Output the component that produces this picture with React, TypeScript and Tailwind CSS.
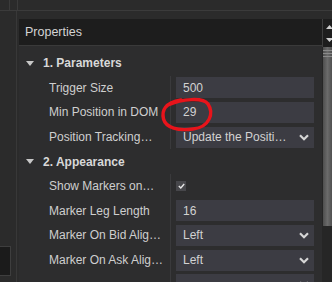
import React from 'react';

type Row =
  | { kind: 'section'; title: string }
  | { kind: 'text'; label: string; value: string }
  | { kind: 'select'; label: string; value: string }
  | { kind: 'check'; label: string };

const rows: Row[] = [
  { kind: 'section', title: '1. Parameters' },
  { kind: 'text', label: 'Trigger Size', value: '500' },
  { kind: 'text', label: 'Min Position in DOM', value: '29' },
  { kind: 'select', label: 'Position Tracking…', value: 'Update the Positi…' },
  { kind: 'section', title: '2. Appearance' },
  { kind: 'check', label: 'Show Markers on…' },
  { kind: 'text', label: 'Marker Leg Length', value: '16' },
  { kind: 'select', label: 'Marker On Bid Alig…', value: 'Left' },
  { kind: 'select', label: 'Marker On Ask Alig…', value: 'Left' },
  { kind: 'select', label: '', value: '' },
];

function Chevron() {
  return (
    <svg width="10" height="7" viewBox="0 0 10 7" className="shrink-0">
      <path d="M1 1.2 L5 5.2 L9 1.2" fill="none" stroke="#d6d6d6" strokeWidth="2.2" />
    </svg>
  );
}

function PropertyRow({ row }: { row: Row }) {
  if (row.kind === 'section') {
    return (
      <div className="flex h-[24.6px] items-center">
        <svg width="8" height="5" viewBox="0 0 8 5" className="ml-[7px] mr-[9px]">
          <path d="M0 0 H8 L4 5 Z" fill="#c8c8c8" />
        </svg>
        <span className="font-bold text-[#d8d8d8]">{row.title}</span>
      </div>
    );
  }

  return (
    <div className="flex h-[24.6px] items-center">
      <div className="flex h-full w-[152px] shrink-0 items-center border-r border-[#3a3a3c] pl-[30px] text-[#cfcfcf]">
        <span className="whitespace-nowrap">{row.label}</span>
      </div>
      <div className="flex h-full flex-1 items-center pl-[5px] pr-[8px]">
        {row.kind === 'check' ? (
          <div className="flex h-[10px] w-[10px] items-center justify-center bg-[#47474b]">
            <svg width="7" height="6" viewBox="0 0 7 6">
              <path d="M0.8 3 L2.8 5 L6.2 1" fill="none" stroke="#e6e6e6" strokeWidth="1.4" />
            </svg>
          </div>
        ) : (
          <div className="flex h-[21px] flex-1 items-center justify-between bg-[#3c3c43] pl-[7px] pr-[5px] text-[#d2d2d2]">
            <span className="whitespace-nowrap">{row.value}</span>
            {row.kind === 'select' && <Chevron />}
          </div>
        )}
      </div>
    </div>
  );
}

export default function App() {
  return (
    <div
      className="relative flex h-[282px] w-[332px] flex-col overflow-hidden bg-[#2b2b2b] text-[12px] leading-none"
      style={{ fontFamily: '"Liberation Sans", Arial, sans-serif' }}
    >
      {/* Top strip */}
      <div className="flex h-[11px] shrink-0 border-b border-[#3b3b3b]">
        <div className="w-[10px] border-r border-[#3b3b3b]" />
        <div className="w-[8px] border-r border-[#3b3b3b]" />
        <div className="flex-1" />
      </div>

      <div className="flex min-h-0 flex-1">
        {/* Left dock strip */}
        <div className="flex w-[17px] shrink-0 flex-col border-r border-[#383838]">
          <div className="flex-1" />
          <div className="mb-[6px] h-[30px] w-[11px] border-y border-r border-[#3e3e3e] bg-[#1b1b1b]" />
        </div>

        {/* Properties panel */}
        <div className="ml-[2px] mt-[8px] flex min-w-0 flex-1">
          <div className="flex min-w-0 flex-1 flex-col bg-[#2d2d2e]">
            <div className="flex h-[27px] shrink-0 items-center border-b border-[#3a3a3a] bg-[#1d1d1d] pl-[6px] text-[12.5px] text-[#d4d4d4]">
              Properties
            </div>
            <div className="pt-[5px]">
              {rows.map((row, i) => (
                <PropertyRow key={i} row={row} />
              ))}
            </div>
          </div>

          {/* Scrollbar */}
          <div className="flex w-[10px] shrink-0 flex-col">
            <div className="flex h-[28px] flex-col items-center justify-center gap-[9px] border-l border-[#3e3e3e] bg-[#1d1d1d] pl-[3px]">
              <svg width="7" height="4" viewBox="0 0 7 4">
                <path d="M0 4 L3.5 0 L7 4 Z" fill="#d0d0d0" />
              </svg>
              <svg width="7" height="4" viewBox="0 0 7 4">
                <path d="M0 0 L3.5 4 L7 0 Z" fill="#d0d0d0" />
              </svg>
            </div>
            <div className="flex flex-1 flex-col bg-[#262626]">
              <div className="ml-[1px] flex h-[179px] flex-col gap-[2px] bg-gradient-to-r from-[#4e4e4e] via-[#6b6b6b] to-[#505050] pt-[3px]">
                <div className="h-px bg-[#8a8a8a]" />
                <div className="h-px bg-[#8a8a8a]" />
                <div className="h-px bg-[#8a8a8a]" />
              </div>
            </div>
          </div>
        </div>
      </div>

      {/* Hand-drawn red annotation around the value */}
      <svg
        className="pointer-events-none absolute left-0 top-0"
        width="332"
        height="282"
        viewBox="0 0 332 282"
      >
        <path
          d="M168 105 C182 99, 203 97, 208 104 C214 113, 210 127, 193 129 C178 131, 166 128, 163.5 119 C161.5 110, 165 103, 181 100"
          fill="none"
          stroke="#e8141b"
          strokeWidth="3.4"
          strokeLinecap="round"
        />
      </svg>
    </div>
  );
}
